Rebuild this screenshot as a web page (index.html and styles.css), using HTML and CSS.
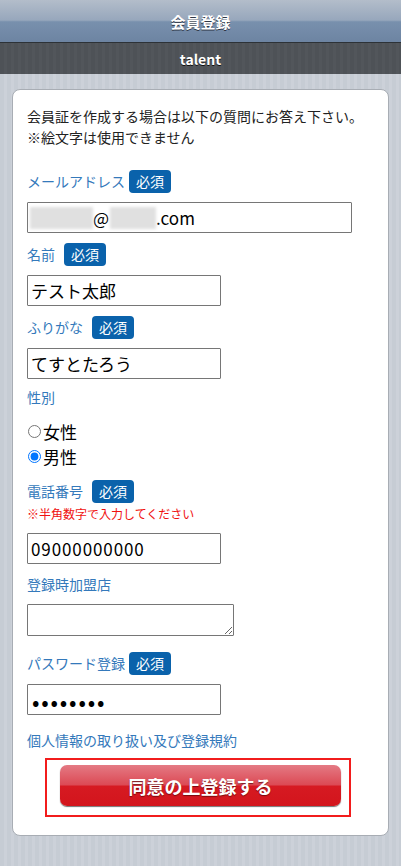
FILE: index.html
```html
<!DOCTYPE html>
<html lang="ja">
<head>
<meta charset="utf-8">
<title>会員登録</title>
<link rel="stylesheet" href="styles.css">
</head>
<body>
<header class="top-bar"><h1 class="top-title">会員登録</h1></header>
<div class="sub-bar">talent</div>
<main class="card">
  <p class="intro">会員証を作成する場合は以下の質問にお答え下さい。<br>※絵文字は使用できません</p>

  <div class="label-row first"><span class="label">メールアドレス</span><span class="badge">必須</span></div>
  <div class="field email-field"><span class="blur b1"></span>@<span class="blur b2"></span>.com</div>

  <div class="label-row"><span class="label">名前</span><span class="badge wide">必須</span></div>
  <input class="field short" type="text" value="テスト太郎">

  <div class="label-row"><span class="label">ふりがな</span><span class="badge wide">必須</span></div>
  <input class="field short" type="text" value="てすとたろう">

  <div class="label-row plain"><span class="label">性別</span></div>
  <div class="radios">
    <label class="radio-row"><input type="radio" name="sex"><span>女性</span></label>
    <label class="radio-row"><input type="radio" name="sex" checked><span>男性</span></label>
  </div>

  <div class="label-row tel"><span class="label">電話番号</span><span class="badge wide">必須</span></div>
  <p class="note">※半角数字で入力してください</p>
  <input class="field short tel-input" type="text" value="09000000000">

  <div class="label-row shop"><span class="label">登録時加盟店</span></div>
  <textarea class="field area"></textarea>

  <div class="label-row pass"><span class="label">パスワード登録</span><span class="badge">必須</span></div>
  <input class="field short pw" type="password" value="password">

  <a class="terms" href="#">個人情報の取り扱い及び登録規約</a>

  <div class="submit-box"><button class="submit" type="button">同意の上登録する</button></div>
</main>
</body>
</html>
```

FILE: styles.css
```css
html, body {
  margin: 0;
  padding: 0;
}
body {
  width: 401px;
  min-height: 866px;
  font-family: "Noto Sans CJK JP", "Noto Sans", sans-serif;
  background: repeating-linear-gradient(90deg, #c6ccd4 0 4px, #ccd1d9 4px 7px);
  overflow: hidden;
}
.top-bar {
  height: 42px;
  background: linear-gradient(180deg, #b3bdca 0%, #97a7bc 48%, #7890ad 52%, #6d84a2 100%);
  border-bottom: 1px solid #2d3237;
  display: flex;
  align-items: center;
  justify-content: center;
}
.top-title {
  margin: 0;
  font-size: 15px;
  font-weight: bold;
  color: #fff;
  text-shadow: 0 1px 0 #2c3544;
  line-height: 1;
}
.sub-bar {
  height: 31px;
  background: repeating-linear-gradient(90deg, #4e5257 0 4px, #52565b 4px 7px);
  color: #fff;
  font-size: 14px;
  font-weight: bold;
  display: flex;
  align-items: center;
  justify-content: center;
  text-shadow: 0 1px 0 #111;
}
.card {
  margin: 15px 12px 0;
  background: #fff;
  border: 1px solid #a8adb4;
  border-radius: 8px;
  padding: 16px 14px 18px 14px;
  display: flex;
  flex-direction: column;
  align-items: flex-start;
}
.intro {
  margin: 0;
  font-size: 14px;
  line-height: 21px;
  color: #222;
}
.label-row {
  height: 24px;
  margin-top: 9px;
  display: flex;
  align-items: center;
  font-size: 14px;
  color: #3479bb;
}
.label-row.first { margin-top: 21px; }
.label-row.plain { margin-top: 6px; }
.label-row.tel { margin-top: 10px; }
.label-row.shop { margin-top: 8px; }
.label-row.pass { margin-top: 15px; }
.badge {
  margin-left: 4px;
  height: 23px;
  padding: 0 7px;
  border-radius: 4px;
  background: #0a62ab;
  color: #fff;
  font-size: 14px;
  line-height: 23px;
}
.badge.wide { margin-left: 9px; }
.field {
  box-sizing: border-box;
  margin: 9px 0 0;
  height: 31px;
  border: 1px solid #767676;
  border-radius: 1px;
  padding: 0 3px;
  font-family: "Noto Sans CJK JP", "Noto Sans", sans-serif;
  font-size: 17px;
  color: #000;
  background: #fff;
}
.short { width: 194px; }
.email-field {
  width: 325px;
  display: flex;
  align-items: center;
  padding-left: 2px;
}
.blur {
  display: inline-block;
  height: 22px;
  background: #e0e0e0;
  filter: blur(1.5px);
}
.b1 { width: 63px; }
.b2 { width: 46px; margin-left: 1px; }
.radios {
  margin-top: 10px;
  display: flex;
  flex-direction: column;
}
.radio-row {
  height: 25px;
  display: flex;
  align-items: center;
  font-size: 17px;
  color: #000;
}
.radio-row input {
  margin: 0 2px 0 1px;
  width: 13px;
  height: 13px;
}
.note {
  margin: 2px 0 0;
  font-size: 12px;
  line-height: 18px;
  color: #f01010;
}
.tel-input { margin-top: 10px; letter-spacing: 0.9px; }
.area {
  margin-top: 8px;
  width: 207px;
  height: 32px;
  resize: both;
}
.pw {
  font-size: 22px;
  letter-spacing: 1.8px;
  padding-left: 4px;
}
.terms {
  margin-top: 13px;
  height: 24px;
  line-height: 24px;
  font-size: 14px;
  color: #3479bb;
  text-decoration: none;
}
.submit-box {
  margin: 6px 0 0 18px;
  box-sizing: border-box;
  width: 306px;
  height: 59px;
  border: 2px solid #f21c1c;
  padding: 5px 8px 9px 13px;
}
.submit {
  display: block;
  width: 281px;
  height: 41px;
  border: none;
  border-radius: 7px;
  background: linear-gradient(180deg, #e47a84 0%, #dc4a55 48%, #d61a22 52%, #d3151c 100%);
  box-shadow: 0 1px 1px rgba(0,0,0,0.55);
  color: #fff;
  font-family: "Noto Sans CJK JP", "Noto Sans", sans-serif;
  font-size: 18px;
  font-weight: bold;
  text-shadow: 0 1px 1px rgba(60,0,0,0.6);
  padding: 0;
  cursor: pointer;
}
```
